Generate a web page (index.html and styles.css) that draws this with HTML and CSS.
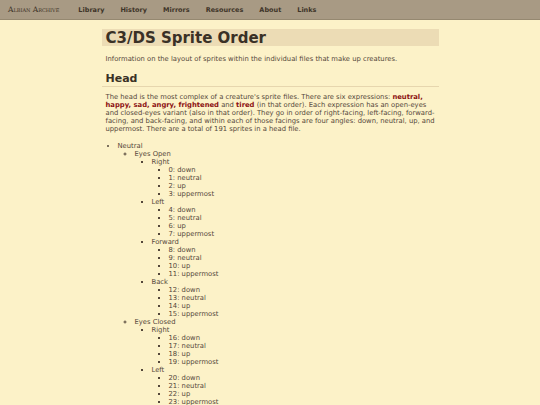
FILE: index.html
```html
<!DOCTYPE html>
<html>
<head>
<meta charset="utf-8">
<link rel="stylesheet" href="styles.css">
</head>
<body>
<nav class="nav">
  <span class="brand">Albian Archive</span>
  <a class="nav-link">Library</a>
  <a class="nav-link">History</a>
  <a class="nav-link">Mirrors</a>
  <a class="nav-link">Resources</a>
  <a class="nav-link">About</a>
  <a class="nav-link">Links</a>
</nav>
<main class="content">
  <h1 class="title">C3/DS Sprite Order</h1>
  <p class="intro">Information on the layout of sprites within the individual files that make up creatures.</p>
  <h2 class="section">Head</h2>
  <p class="text">The head is the most complex of a creature's sprite files. There are six expressions: <b class="hl">neutral, happy, sad, angry, frightened</b> and <b class="hl">tired</b> (in that order). Each expression has an open-eyes and closed-eyes variant (also in that order). They go in order of right-facing, left-facing, forward-facing, and back-facing, and within each of those facings are four angles: down, neutral, up, and uppermost. There are a total of 191 sprites in a head file.</p>
  <ul class="tree">
    <li>Neutral
      <ul>
        <li>Eyes Open
          <ul>
            <li>Right<ul><li>0: down</li><li>1: neutral</li><li>2: up</li><li>3: uppermost</li></ul></li>
            <li>Left<ul><li>4: down</li><li>5: neutral</li><li>6: up</li><li>7: uppermost</li></ul></li>
            <li>Forward<ul><li>8: down</li><li>9: neutral</li><li>10: up</li><li>11: uppermost</li></ul></li>
            <li>Back<ul><li>12: down</li><li>13: neutral</li><li>14: up</li><li>15: uppermost</li></ul></li>
          </ul>
        </li>
        <li>Eyes Closed
          <ul>
            <li>Right<ul><li>16: down</li><li>17: neutral</li><li>18: up</li><li>19: uppermost</li></ul></li>
            <li>Left<ul><li>20: down</li><li>21: neutral</li><li>22: up</li><li>23: uppermost</li></ul></li>
            <li>Forward<ul><li>24: down</li><li>25: neutral</li><li>26: up</li><li>27: uppermost</li></ul></li>
          </ul>
        </li>
      </ul>
    </li>
  </ul>
</main>
</body>
</html>
```
FILE: styles.css
```css
html, body {
  margin: 0;
  padding: 0;
}
body {
  background: #fcf2c8;
  font-family: "DejaVu Sans", Verdana, sans-serif;
  color: #54473a;
  font-size: 6.8px;
  line-height: 8px;
  overflow: hidden;
  height: 405px;
}
.nav {
  display: flex;
  align-items: center;
  gap: 16px;
  height: 19px;
  padding: 0 8px;
  background: #a89a84;
  border-bottom: 1px solid #958870;
}
.brand {
  font-family: "DejaVu Serif", "Liberation Serif", serif;
  font-variant: small-caps;
  font-size: 7.5px;
  color: #3e3428;
  margin-right: 3px;
}
.nav-link {
  font-weight: bold;
  font-size: 6.5px;
  color: #3e3428;
}
.content {
  width: 337px;
  margin: 0 auto;
  padding-top: 9px;
}
.title {
  margin: 0;
  background: #ecdcb5;
  padding: 1px 4px 0;
  height: 16px;
  font-size: 15px;
  line-height: 16px;
  color: #3a3126;
}
.intro {
  margin: 9px 4px 10px;
}
.section {
  margin: 0;
  padding: 0 4px 1px;
  font-size: 11px;
  line-height: 12px;
  color: #3a3126;
  border-bottom: 1px solid #e6d6ae;
}
.text {
  margin: 6px 0 9px 4px;
}
.hl {
  color: #8b1010;
}
.tree {
  margin: 0;
  padding-left: 16px;
}
.tree ul {
  margin: 0;
  padding-left: 17px;
}
```
